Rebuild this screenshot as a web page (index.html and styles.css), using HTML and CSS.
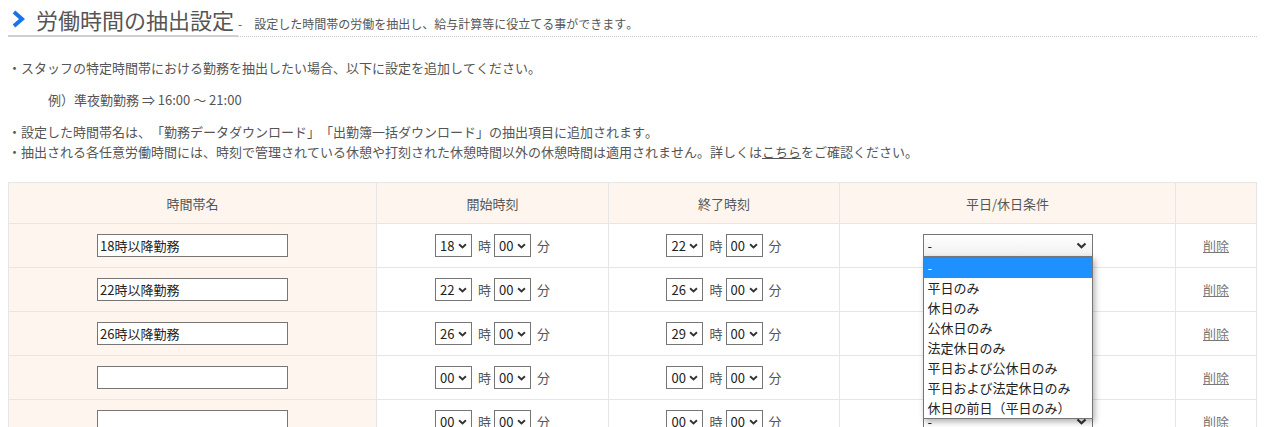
FILE: index.html
```html
<!DOCTYPE html>
<html lang="ja">
<head>
<meta charset="utf-8">
<link rel="stylesheet" href="styles.css">
</head>
<body>
<div class="page-head">
  <h1 class="title">
    <svg class="chev" width="13" height="18" viewBox="0 0 13 18"><path d="M2 2 L10 9 L2 16" fill="none" stroke="#1a73e8" stroke-width="4" stroke-linejoin="miter"/></svg>
    <span class="title-text">労働時間の抽出設定</span>
  </h1>
  <span class="dash">-</span>
  <span class="sub">設定した時間帯の労働を抽出し、給与計算等に役立てる事ができます。</span>
</div>

<div class="notes">
  <p class="n1">・スタッフの特定時間帯における勤務を抽出したい場合、以下に設定を追加してください。</p>
  <p class="ex">例）準夜勤勤務 ⇒ 16:00 ～ 21:00</p>
  <p class="n3">・設定した時間帯名は、「勤務データダウンロード」「出勤簿一括ダウンロード」の抽出項目に追加されます。</p>
  <p>・抽出される各任意労働時間には、時刻で管理されている休憩や打刻された休憩時間以外の休憩時間は適用されません。詳しくは<a class="ul" href="#">こちら</a>をご確認ください。</p>
</div>

<table class="grid">
  <thead>
    <tr>
      <th class="c1">時間帯名</th>
      <th class="c2">開始時刻</th>
      <th class="c3">終了時刻</th>
      <th class="c4">平日/休日条件</th>
      <th class="c5"></th>
    </tr>
  </thead>
  <tbody>
    <tr>
      <td class="c1"><input class="name" type="text" value="18時以降勤務"></td>
      <td><span class="tm"><select class="hm"><option>18</option></select><span class="u">時</span><select class="hm"><option>00</option></select><span class="u">分</span></span></td>
      <td><span class="tm"><select class="hm"><option>22</option></select><span class="u">時</span><select class="hm"><option>00</option></select><span class="u">分</span></span></td>
      <td><div class="cond-wrap"><select class="cond open"><option>-</option></select>
        <div class="dropdown">
          <div class="opt sel">-</div>
          <div class="opt">平日のみ</div>
          <div class="opt">休日のみ</div>
          <div class="opt">公休日のみ</div>
          <div class="opt">法定休日のみ</div>
          <div class="opt">平日および公休日のみ</div>
          <div class="opt">平日および法定休日のみ</div>
          <div class="opt">休日の前日（平日のみ）</div>
        </div></div></td>
      <td><a class="del" href="#">削除</a></td>
    </tr>
    <tr>
      <td class="c1"><input class="name" type="text" value="22時以降勤務"></td>
      <td><span class="tm"><select class="hm"><option>22</option></select><span class="u">時</span><select class="hm"><option>00</option></select><span class="u">分</span></span></td>
      <td><span class="tm"><select class="hm"><option>26</option></select><span class="u">時</span><select class="hm"><option>00</option></select><span class="u">分</span></span></td>
      <td><div class="cond-wrap"><select class="cond"><option>-</option></select></div></td>
      <td><a class="del" href="#">削除</a></td>
    </tr>
    <tr>
      <td class="c1"><input class="name" type="text" value="26時以降勤務"></td>
      <td><span class="tm"><select class="hm"><option>26</option></select><span class="u">時</span><select class="hm"><option>00</option></select><span class="u">分</span></span></td>
      <td><span class="tm"><select class="hm"><option>29</option></select><span class="u">時</span><select class="hm"><option>00</option></select><span class="u">分</span></span></td>
      <td><div class="cond-wrap"><select class="cond"><option>-</option></select></div></td>
      <td><a class="del" href="#">削除</a></td>
    </tr>
    <tr>
      <td class="c1"><input class="name" type="text" value=""></td>
      <td><span class="tm"><select class="hm"><option>00</option></select><span class="u">時</span><select class="hm"><option>00</option></select><span class="u">分</span></span></td>
      <td><span class="tm"><select class="hm"><option>00</option></select><span class="u">時</span><select class="hm"><option>00</option></select><span class="u">分</span></span></td>
      <td><div class="cond-wrap"><select class="cond"><option>-</option></select></div></td>
      <td><a class="del" href="#">削除</a></td>
    </tr>
    <tr>
      <td class="c1"><input class="name" type="text" value=""></td>
      <td><span class="tm"><select class="hm"><option>00</option></select><span class="u">時</span><select class="hm"><option>00</option></select><span class="u">分</span></span></td>
      <td><span class="tm"><select class="hm"><option>00</option></select><span class="u">時</span><select class="hm"><option>00</option></select><span class="u">分</span></span></td>
      <td><div class="cond-wrap"><select class="cond"><option>-</option></select></div></td>
      <td><a class="del" href="#">削除</a></td>
    </tr>
  </tbody>
</table>
</body>
</html>
```

FILE: styles.css
```css
html, body {
  margin: 0;
  padding: 0;
  background: #fff;
}
body {
  margin: 8px;
  font-family: "Noto Sans CJK JP", "Noto Sans", sans-serif;
  font-size: 13px;
  color: #555;
  text-spacing-trim: space-all;
  font-kerning: none;
}
.page-head {
  display: flex;
  align-items: baseline;
  border-bottom: 1px dotted #c8c8c8;
  height: 29px;
  box-sizing: border-box;
}
.title {
  display: flex;
  align-items: center;
  margin: 0;
  font-weight: normal;
  font-size: 22px;
  line-height: 24px;
  height: 29px;
  box-sizing: border-box;
  padding-bottom: 5px;
  padding-right: 4px;
  border-bottom: 2px solid #d0d0d0;
  margin-bottom: -1px;
  color: #555;
  align-self: flex-start;
}
.chev {
  margin-left: 4px;
  margin-right: 11px;
  flex: none;
}
.dash {
  font-size: 12px;
  margin-left: 0;
  align-self: center;
  margin-top: 2px;
}
.sub {
  font-size: 12px;
  margin-left: 12px;
  align-self: center;
  margin-top: 2px;
}
.notes {
  margin-top: 21px;
}
.notes p {
  margin: 0;
  line-height: 20px;
}
.notes .n1 { margin-bottom: 12px; }
.notes .ex { padding-left: 40px; margin-bottom: 12px; }
a.ul {
  color: #555;
  text-decoration: underline;
}
table.grid {
  margin-top: 20px;
  width: 100%;
  border-collapse: collapse;
  border: 1px solid #e6e6e6;
}
.grid th, .grid td {
  border: 1px solid #e6e6e6;
  text-align: center;
  vertical-align: middle;
  padding: 0;
}
.grid th {
  background: #fef5ef;
  font-weight: normal;
  height: 40px;
  color: #555;
}
.grid td {
  height: 43px;
}
.grid td.c1 { background: #fef5ef; }
.c1 { width: 367px; }
.c2 { width: 231px; }
.c3 { width: 230px; }
.c4 { width: 335px; }
input.name {
  width: 191px;
  height: 23px;
  box-sizing: border-box;
  border: 1px solid #767676;
  border-radius: 0;
  padding: 0 2px;
  font-family: "Noto Sans CJK JP", sans-serif;
  font-size: 13px;
  color: #222;
  background: #fff;
  outline: none;
}
.tm {
  display: inline-flex;
  align-items: center;
}
.tm .u:first-of-type {
  margin: 0 3px 0 6px;
}
.tm .u:last-of-type {
  margin-left: 6px;
}
select {
  -webkit-appearance: none;
  appearance: none;
  font-family: "Noto Sans CJK JP", sans-serif;
  font-size: 13px;
  color: #222;
  height: 23px;
  box-sizing: border-box;
  border: 1px solid #767676;
  border-radius: 0;
  background-color: #fff;
  background-image: url("data:image/svg+xml,%3Csvg xmlns='http://www.w3.org/2000/svg' width='10' height='7' viewBox='0 0 10 7'%3E%3Cpath d='M1 1.5 L5 5.2 L9 1.5' fill='none' stroke='%23333' stroke-width='2.2'/%3E%3C/svg%3E");
  background-repeat: no-repeat;
  background-position: right 4px center;
  background-size: 9px 6px;
  outline: none;
}
select.hm {
  width: 37px;
  padding: 0 0 0 4px;
}
.cond-wrap {
  position: relative;
  display: inline-block;
  width: 170px;
  vertical-align: middle;
}
select.cond {
  width: 170px;
  display: block;
  padding-left: 4px;
  background-position: right 5px center;
  background-size: 11px 7px;
}
select.cond.open {
  background-image: url("data:image/svg+xml,%3Csvg xmlns='http://www.w3.org/2000/svg' width='10' height='7' viewBox='0 0 10 7'%3E%3Cpath d='M1 1.5 L5 5.2 L9 1.5' fill='none' stroke='%23333' stroke-width='2.2'/%3E%3C/svg%3E"), linear-gradient(#fff, #f0f0f0);
  background-position: right 5px center, 0 0;
  background-size: 11px 7px, 100% 100%;
}
.dropdown {
  position: absolute;
  left: 0;
  top: 22px;
  width: 170px;
  box-sizing: border-box;
  border: 1px solid #767676;
  border-top: 2px solid #767676;
  background: #fff;
  text-align: left;
  box-shadow: 2px 3px 6px rgba(0,0,0,0.3);
  z-index: 5;
}
.opt {
  height: 20px;
  line-height: 20px;
  padding-left: 4px;
  font-size: 13px;
  color: #222;
  white-space: nowrap;
}
.opt.sel {
  background: #1e90ff;
  color: #fff;
}
a.del {
  color: #777;
  text-decoration: underline;
}
```
